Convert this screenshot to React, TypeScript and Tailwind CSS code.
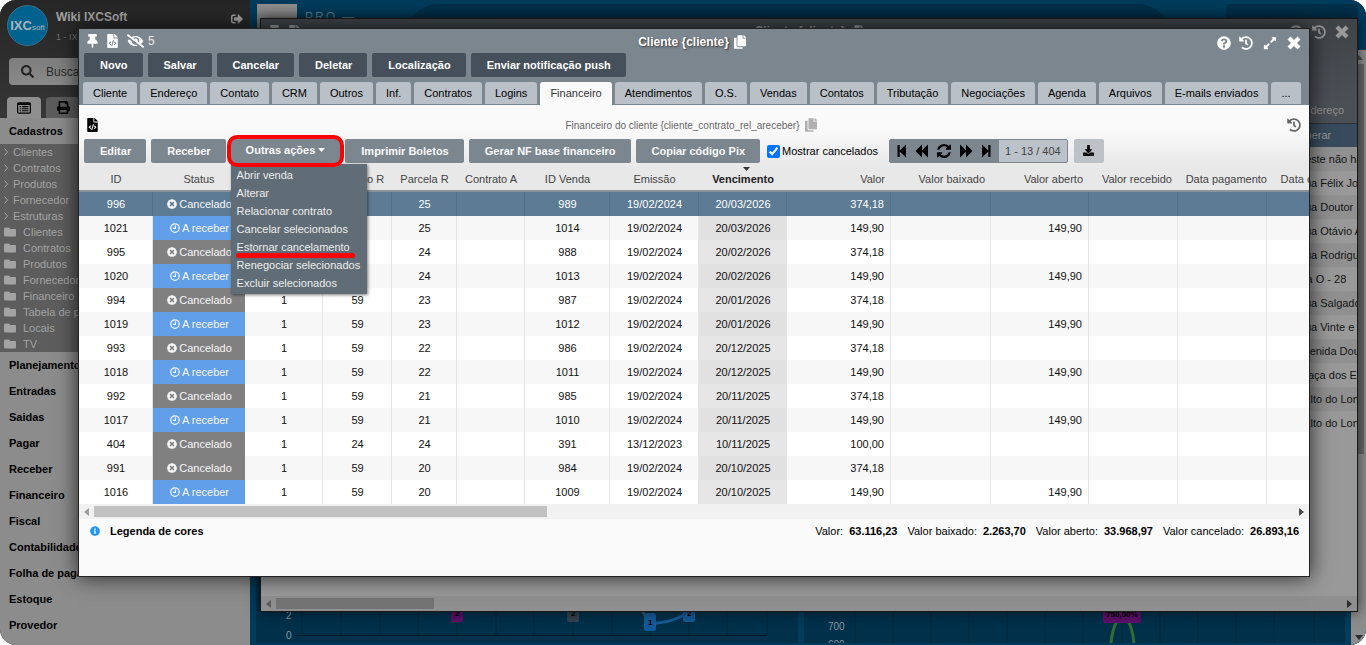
import React from 'react';
import {
    FaCopy,
    FaDownload,
    FaExpandAlt,
    FaEyeSlash,
    FaFileCode,
    FaFolder,
    FaHistory,
    FaInfoCircle,
    FaPrint,
    FaQuestionCircle,
    FaSearch,
    FaSignOutAlt,
    FaThumbtack,
    FaTimesCircle
} from 'react-icons/fa';

type Status = 'Cancelado' | 'A receber';

interface Receivable {
    id: string;
    status: Status;
    contract: string;
    parcel: string;
    sale: string;
    issued: string;
    due: string;
    value: string;
    open: string;
}

const row = (
    id: string,
    status: Status,
    contract: string,
    parcel: string,
    sale: string,
    issued: string,
    due: string,
    value: string,
    open = ''
): Receivable => ({ id, status, contract, parcel, sale, issued, due, value, open });

const RECEIVABLES: Receivable[] = [
    row('996', 'Cancelado', '59', '25', '989', '19/02/2024', '20/03/2026', '374,18'),
    row('1021', 'A receber', '59', '25', '1014', '19/02/2024', '20/03/2026', '149,90', '149,90'),
    row('995', 'Cancelado', '59', '24', '988', '19/02/2024', '20/02/2026', '374,18'),
    row('1020', 'A receber', '59', '24', '1013', '19/02/2024', '20/02/2026', '149,90', '149,90'),
    row('994', 'Cancelado', '59', '23', '987', '19/02/2024', '20/01/2026', '374,18'),
    row('1019', 'A receber', '59', '23', '1012', '19/02/2024', '20/01/2026', '149,90', '149,90'),
    row('993', 'Cancelado', '59', '22', '986', '19/02/2024', '20/12/2025', '374,18'),
    row('1018', 'A receber', '59', '22', '1011', '19/02/2024', '20/12/2025', '149,90', '149,90'),
    row('992', 'Cancelado', '59', '21', '985', '19/02/2024', '20/11/2025', '374,18'),
    row('1017', 'A receber', '59', '21', '1010', '19/02/2024', '20/11/2025', '149,90', '149,90'),
    row('404', 'Cancelado', '24', '24', '391', '13/12/2023', '10/11/2025', '100,00'),
    row('991', 'Cancelado', '59', '20', '984', '19/02/2024', '20/10/2025', '374,18'),
    row('1016', 'A receber', '59', '20', '1009', '19/02/2024', '20/10/2025', '149,90', '149,90')
];

const COLUMNS = [
    { label: 'ID', className: 'w-[74px] text-center' },
    { label: 'Status', className: 'w-[92px] text-center' },
    { label: '', className: 'w-[78px] text-center' },
    { label: 'Contrato R', className: 'w-[69px] text-center' },
    { label: 'Parcela R', className: 'w-[65px] text-center' },
    { label: 'Contrato A', className: 'w-[68px] text-center' },
    { label: 'ID Venda', className: 'w-[85px] text-center' },
    { label: 'Emissão', className: 'w-[89px] text-center' },
    { label: 'Vencimento', className: 'w-[88px] text-center' },
    { label: 'Valor', className: 'w-[104px] pr-1.5 text-right' },
    { label: 'Valor baixado', className: 'w-[100px] pr-1.5 text-right' },
    { label: 'Valor aberto', className: 'w-[98px] pr-1.5 text-right' },
    { label: 'Valor recebido', className: 'w-[89px] pr-1.5 text-right' },
    { label: 'Data pagamento', className: 'w-[89px] text-right' },
    { label: 'Data cancelamento', className: 'w-[122px] text-center' }
];

const SHORTCUTS = ['Clientes', 'Contratos', 'Produtos', 'Fornecedor', 'Estruturas'];
const FOLDERS = ['Clientes', 'Contratos', 'Produtos', 'Fornecedores', 'Financeiro', 'Tabela de preços', 'Locais', 'TV'];
const SECTIONS = [
    'Planejamento',
    'Entradas',
    'Saidas',
    'Pagar',
    'Receber',
    'Financeiro',
    'Fiscal',
    'Contabilidade',
    'Folha de pagamento',
    'Estoque',
    'Provedor'
];

const FORM_ACTIONS = ['Novo', 'Salvar', 'Cancelar', 'Deletar', 'Localização', 'Enviar notificação push'];
const TABS = [
    'Cliente',
    'Endereço',
    'Contato',
    'CRM',
    'Outros',
    'Inf.',
    'Contratos',
    'Logins',
    'Financeiro',
    'Atendimentos',
    'O.S.',
    'Vendas',
    'Contatos',
    'Tributação',
    'Negociações',
    'Agenda',
    'Arquivos',
    'E-mails enviados',
    '...'
];
const MENU_ITEMS = [
    'Abrir venda',
    'Alterar',
    'Relacionar contrato',
    'Cancelar selecionados',
    'Estornar cancelamento',
    'Renegociar selecionados',
    'Excluir selecionados'
];
const ADDRESSES = [
    'Neste não há',
    'Rua Félix José',
    'Rua Doutor',
    'Rua Otávio A',
    'Rua Rodrigues',
    'Via O - 28',
    'Rua Salgado',
    'Rua Vinte e',
    'Avenida Doutor',
    'Praça dos E',
    'Salto do Lontra',
    'Salto do Lontra'
];
const TOTALS = [
    { label: 'Valor:', value: '63.116,23' },
    { label: 'Valor baixado:', value: '2.263,70' },
    { label: 'Valor aberto:', value: '33.968,97' },
    { label: 'Valor cancelado:', value: '26.893,16' }
];

const ClockIcon = () => (
    <svg viewBox="0 0 16 16" className="size-2.5" fill="none" stroke="currentColor" strokeWidth="2">
        <circle cx="8" cy="8" r="6.8" />
        <path d="M8.6 3.6v5H4.6" strokeWidth="1.8" />
    </svg>
);

const CloseIcon = () => (
    <svg viewBox="0 0 14 14" className="size-3.5" fill="none" stroke="currentColor" strokeWidth="4.2">
        <path d="M2 2l10 10M12 2L2 12" />
    </svg>
);

const ListIcon = () => (
    <svg viewBox="0 0 16 13" className="h-3 w-3.5" fill="none" stroke="currentColor">
        <rect x="0.7" y="0.7" width="14.6" height="11.6" rx="1.2" strokeWidth="1.4" />
        <path d="M1 2h14" strokeWidth="2" />
        <path d="M3 5h1.6M3 7.3h1.6M3 9.6h1.6M5.6 5H13M5.6 7.3H13M5.6 9.6H13" strokeWidth="1.3" />
    </svg>
);

const StepIcon = () => (
    <svg viewBox="0 0 10 14" className="h-3.5 w-2.5" fill="currentColor">
        <path d="M0.5 1h2.2v5.6L9 0.5v13L2.7 7.4V13H0.5z" />
    </svg>
);

const RewindIcon = () => (
    <svg viewBox="0 0 14 14" className="size-3.5" fill="currentColor">
        <path d="M0.5 7L7 0.6v5.7L13 0.6v12.8L7 7.7v5.7z" />
    </svg>
);

const RefreshIcon = () => (
    <svg viewBox="0 128 1536 1536" className="size-3.5" fill="currentColor">
        <path d="M1511 1056q0 5-1 7-64 268-268 434.5t-478 166.5q-146 0-282.5-55t-243.5-157l-129 129q-19 19-45 19t-45-19-19-45v-448q0-26 19-45t45-19h448q26 0 45 19t19 45-19 45l-137 137q71 66 161 102t187 36q134 0 250-65t186-179q11-17 53-117 8-23 30-23h192q13 0 22.5 9.5t9.5 22.5zm25-800v448q0 26-19 45t-45 19h-448q-26 0-45-19t-19-45 19-45l138-138q-148-137-349-137-134 0-250 65t-186 179q-11 17-53 117-8 23-30 23h-199q-13 0-22.5-9.5t-9.5-22.5v-7q65-268 270-434.5t480-166.5q146 0 284 55.5t245 156.5l130-129q19-19 45-19t45 19 19 45z" />
    </svg>
);

const Sidebar = () => (
    <aside className="flex w-[250px] shrink-0 flex-col bg-[#8c8c8c]">
        <div className="bg-linear-to-b from-[#262626] to-[#363636]">
            <div className="flex h-[58px] items-start gap-2 pl-[7px] pr-[7px] pt-[5px]">
                <div className="flex size-[41px] items-center justify-center rounded-full border border-[#3a6f88] bg-[#00628f] text-[#a9b4ba]">
                    <span className="text-[13px] font-bold leading-none">IXC</span>
                    <span className="pt-1 text-[8px] leading-none">soft</span>
                </div>
                <div className="flex-1 pt-1">
                    <div className="text-[12px] font-bold leading-4 text-[#a3a3a3]">Wiki IXCSoft</div>
                    <div className="pt-1 text-[9px] leading-4 text-[#6f6f6f]">1 - IXCSoft</div>
                </div>
                <button aria-label="Sair" className="pt-2 text-[#a0a0a0]">
                    <FaSignOutAlt className="size-3" />
                </button>
            </div>
            <label className="mx-[9px] flex h-[27px] items-center gap-3 rounded bg-linear-to-b from-[#7d7d7d] to-[#8a8a8a] pl-3 text-[#222222]">
                <FaSearch className="size-[13px] shrink-0" />
                <input
                    placeholder="Buscar"
                    className="w-full bg-transparent text-[12px] outline-none placeholder:text-[#2b2b2b]"
                />
            </label>
            <div className="mt-3 flex gap-[5px] pl-[7px]">
                <button
                    aria-label="Menu"
                    className="flex h-[21px] w-[34px] items-center justify-center rounded-t bg-[#8f8f8f] text-black"
                >
                    <ListIcon />
                </button>
                <button
                    aria-label="Relatórios"
                    className="flex h-[21px] w-[34px] items-center justify-center rounded-t bg-[#5c5c5c] text-black"
                >
                    <FaPrint className="size-[13px]" />
                </button>
            </div>
        </div>
        <nav className="text-black">
            <a href="#cadastros" className="block pl-[9px] text-[11px] font-bold leading-[26px]">
                Cadastros
            </a>
            <ul className="bg-[#5d5d5d] text-[11px] leading-4 text-[#a3a3a3]">
                {SHORTCUTS.map((item) => (
                    <li key={item}>
                        <a href="#atalho" className="flex items-center gap-[5px] pl-1">
                            <svg viewBox="0 0 4 8" className="h-2 w-1" fill="none" stroke="currentColor">
                                <path d="M0.5 0.5L3.5 4 0.5 7.5" />
                            </svg>
                            {item}
                        </a>
                    </li>
                ))}
                {FOLDERS.map((item) => (
                    <li key={item}>
                        <a href="#pasta" className="flex items-center gap-[7px] pl-1">
                            <FaFolder className="size-3" />
                            {item}
                        </a>
                    </li>
                ))}
            </ul>
            {SECTIONS.map((item) => (
                <a key={item} href="#secao" className="block pl-[9px] text-[11px] font-bold leading-[26px]">
                    {item}
                </a>
            ))}
        </nav>
    </aside>
);

const CHART_GRID = [46, 85, 124, 162, 201, 240, 278, 317, 356, 394, 433, 471, 511];
const PERCENT_GRID = [51, 89, 127, 165, 203, 241, 279, 318, 356, 394, 432, 470, 510];

const CountChart = () => (
    <svg width="540" height="34" className="text-[10px]">
        {CHART_GRID.map((x) => (
            <path key={x} d={`M${x} 0V26`} stroke="#002639" />
        ))}
        <path d="M38 26.5H511" stroke="#001a28" />
        <text x="30" y="10" fill="#8b98a0">2</text>
        <text x="30" y="30" fill="#8b98a0">0</text>
        <path d="M385 0l5 8" stroke="#4a5358" strokeWidth="3" />
        <path d="M394 15c16-2 24-3 36-10" stroke="#165c99" strokeWidth="3" fill="none" />
        <rect x="195" y="0" width="12" height="13" rx="2" fill="#5d1069" />
        <rect x="311" y="0" width="12" height="13" rx="2" fill="#33434d" />
        <rect x="351" y="0" width="9" height="3" rx="1" fill="#6f0f78" />
        <rect x="467" y="0" width="9" height="3" rx="1" fill="#33434d" />
        <rect x="388" y="4" width="12" height="18" rx="2" fill="#145a98" />
        <rect x="427" y="0" width="12" height="13" rx="2" fill="#145a98" />
        <g fill="#000000" className="text-[8px] font-bold">
            <text x="199" y="7">2</text>
            <text x="315" y="7">2</text>
            <text x="392" y="16">1</text>
            <text x="431" y="7">2</text>
        </g>
    </svg>
);

const PercentChart = () => (
    <svg width="542" height="34" className="text-[10px]">
        {PERCENT_GRID.map((x) => (
            <path key={x} d={`M${x} 0V34`} stroke="#002639" />
        ))}
        <text x="24" y="21" fill="#8b98a0">700</text>
        <text x="24" y="39" fill="#8b98a0">600</text>
        <path d="M307 34c1-10 3-17 6-22M324 12c4 6 5 13 6 22" stroke="#2f6f31" strokeWidth="3" fill="none" />
        <rect x="299" y="0" width="38" height="14" rx="2" fill="#5d1069" />
        <text x="302" y="8" fill="#000000" className="text-[8px] font-bold">750,00%</text>
    </svg>
);

const Dashboard = () => (
    <main className="flex min-w-0 flex-1 flex-col bg-[#003c5c]">
        <header className="flex h-[50px] shrink-0 gap-2 pl-[7px] pr-2 pt-1">
            <div className="h-full w-10 bg-linear-to-b from-[#8f8f8f] to-[#6b6b6b]" />
            <div className="w-[93px] whitespace-nowrap pt-1 text-[12px] tracking-[2px] text-[#5f7f90]">PRO —</div>
            <div className="h-full flex-1 rounded-t-[32px] bg-[#00304a]" />
            <div className="ml-12 h-full w-[132px] rounded bg-[#00304a]" />
        </header>
        <div className="flex min-h-0 flex-1">
            <div className="mb-0.5 flex min-w-0 flex-1 gap-1.5 px-1.5">
                <section className="flex min-w-0 flex-1 items-end overflow-hidden bg-[#00304a]">
                    <CountChart />
                </section>
                <section className="flex min-w-0 flex-1 items-end overflow-hidden bg-[#00304a]">
                    <PercentChart />
                </section>
            </div>
            <div className="flex w-[15px] flex-col items-center justify-between bg-[#8c8c8c] py-[5px]">
                <svg viewBox="0 0 8 5" className="h-[5px] w-2" fill="#4f4f4f">
                    <path d="M0 5l4-5 4 5z" />
                </svg>
                <div className="mb-auto mt-1 h-2/3 w-[11px] bg-[#666666]" />
                <svg viewBox="0 0 8 5" className="h-[5px] w-2" fill="#2c2c2c">
                    <path d="M0 0l4 5 4-5z" />
                </svg>
            </div>
        </div>
    </main>
);

interface ScrollBarProps {
    className: string;
    thumbClassName: string;
}

const ScrollBar: React.FC<ScrollBarProps> = ({ className, thumbClassName }) => (
    <div className={`flex h-[15px] shrink-0 items-center px-[5px] ${className}`}>
        <svg viewBox="0 0 5 8" className="mr-[5px] h-2 w-[5px]" fill="#000000" fillOpacity="0.35">
            <path d="M5 0v8L0 4z" />
        </svg>
        <div className={`h-[11px] ${thumbClassName}`} />
        <svg viewBox="0 0 5 8" className="ml-auto h-2 w-[5px]" fill="#000000" fillOpacity="0.7">
            <path d="M0 0v8l5-4z" />
        </svg>
    </div>
);

const ListWindow = () => (
    <div className="absolute bottom-[33px] left-[260px] right-2 top-[18px] flex flex-col overflow-hidden border border-[#191919] bg-[#999999] shadow-[0_0_12px_rgba(0,0,0,0.6)]">
        <div className="grid h-[84px] shrink-0 grid-cols-[1fr_auto_1fr] items-start bg-linear-to-b from-[#3f4347] to-[#4b5057] px-2 pt-1.5 text-[#999999]">
            <div className="flex gap-[9px]">
                <FaThumbtack className="h-3.5 w-[11px]" />
                <FaFileCode className="h-3.5 w-[11px]" />
            </div>
            <div className="flex items-start gap-1.5 text-[12px] font-bold leading-3">
                Cliente {'{cliente}'}
                <FaCopy className="h-3.5 w-3" />
            </div>
            <div className="flex items-center justify-end gap-[9px]">
                <FaQuestionCircle className="size-3.5" />
                <FaHistory className="size-3.5" />
                <CloseIcon />
            </div>
        </div>
        <table className="w-full table-fixed text-[11px]">
            <thead>
                <tr className="h-5 bg-[#4b5057] text-[#8f8f8f]">
                    <th />
                    <th className="w-[60px] border-b border-[#2e3236] pb-1.5 text-left font-normal leading-3">Endereço</th>
                </tr>
            </thead>
            <tbody className="text-[#141414]">
                <tr className="h-6 bg-[#384b5c] text-[#969696]">
                    <td />
                    <td className="whitespace-nowrap">Operar</td>
                </tr>
                {ADDRESSES.map((address, index) => (
                    <tr key={index} className="h-6 odd:bg-[#999999] even:bg-[#909090]">
                        <td />
                        <td className="overflow-hidden whitespace-nowrap">{address}</td>
                    </tr>
                ))}
            </tbody>
        </table>
        <div className="flex-1" />
        <ScrollBar className="bg-[#8f8f8f]" thumbClassName="w-[158px] bg-[#737373]" />
    </div>
);

const ClientHeader = () => (
    <div className="bg-[#7c868f]">
        <div className="grid h-6 grid-cols-[1fr_auto_1fr] items-center px-2 text-white">
            <div className="flex items-center gap-[9px]">
                <button aria-label="Fixar"><FaThumbtack className="h-3.5 w-[11px]" /></button>
                <button aria-label="Código"><FaFileCode className="h-3.5 w-[11px]" /></button>
                <button aria-label="Campos ocultos" className="flex items-center gap-1 text-[12px] text-[#e8e8e8]">
                    <FaEyeSlash className="h-3.5 w-[17px] text-white" />5
                </button>
            </div>
            <h1 className="flex items-center gap-[5px] pr-1 pt-0.5 text-[12px] font-bold [text-shadow:1px_1px_2px_#333]">
                Cliente {'{cliente}'}
                <FaCopy className="h-3.5 w-3" />
            </h1>
            <div className="flex items-center justify-end gap-2 pt-1">
                <button aria-label="Ajuda"><FaQuestionCircle className="size-3.5" /></button>
                <button aria-label="Histórico"><FaHistory className="size-3.5" /></button>
                <button aria-label="Expandir" className="px-0.5"><FaExpandAlt className="size-3.5" /></button>
                <button aria-label="Fechar"><CloseIcon /></button>
            </div>
        </div>
        <div className="flex gap-[5px] px-[5px] text-[11px] font-bold text-white">
            {FORM_ACTIONS.map((action) => (
                <button key={action} className="h-6 rounded-xs bg-[#46505a] pl-4 pr-[15px]">
                    {action}
                </button>
            ))}
        </div>
        <div role="tablist" className="mt-[5px] flex gap-[3px] overflow-hidden pl-1 text-[11px] text-black">
            {TABS.map((tab) => (
                <button
                    key={tab}
                    role="tab"
                    aria-selected={tab === 'Financeiro'}
                    className={
                        tab === 'Financeiro'
                            ? 'h-[23px] shrink-0 rounded-t-[3px] bg-[#fafafa] px-2.5 text-[#333333]'
                            : 'mb-px h-[22px] shrink-0 rounded-t-[3px] bg-[#bac0c8] px-2.5'
                    }
                >
                    {tab}
                </button>
            ))}
        </div>
    </div>
);

const TOOL_BUTTON = 'h-6 rounded-xs bg-[#7c868f] pl-4 pr-[15px]';

const Toolbar = () => (
    <div className="bg-linear-to-b from-[#fafafa] from-40% to-[#e8e8e8] pb-1">
        <div className="grid h-[34px] grid-cols-[1fr_auto_1fr] items-center px-2 pt-1.5">
            <FaFileCode className="h-3.5 w-[11px] text-black" />
            <h2 className="flex items-center gap-[5px] pr-1.5 text-[10px] text-[#666666]">
                Financeiro do cliente {'{cliente_contrato_rel_areceber}'}
                <FaCopy className="h-3.5 w-3 text-[#b0b0b0]" />
            </h2>
            <FaHistory className="size-3.5 justify-self-end text-[#666666]" />
        </div>
        <div className="flex items-center px-[5px] text-[11px]">
            <div className="flex gap-[5px] font-bold text-[#fafafa]">
                <button className={TOOL_BUTTON}>Editar</button>
                <button className={TOOL_BUTTON}>Receber</button>
                <div className="relative">
                    <button className="relative z-20 flex h-6 items-center gap-[3px] rounded-md bg-[#7c868f] px-[15px] pb-0.5 ring-4 ring-[#ff0000]">
                        Outras ações
                        <svg viewBox="0 0 7 4" className="h-1 w-[7px]" fill="currentColor">
                            <path d="M0 0h7L3.5 4z" />
                        </svg>
                    </button>
                    <ul className="absolute left-0 top-[25px] z-10 w-[136px] bg-[#606c76] py-0.5 font-normal text-[#ededed] shadow-[1px_1px_3px_rgba(0,0,0,0.5)]">
                        {MENU_ITEMS.map((item) => (
                            <li key={item} className="relative">
                                <button className="block w-full whitespace-nowrap pl-1.5 text-left leading-[18px]">{item}</button>
                                {item === 'Estornar cancelamento' && (
                                    <span className="absolute -bottom-0.5 left-[5px] h-[5px] w-[119px] rounded-full bg-[#ff0000]" />
                                )}
                            </li>
                        ))}
                    </ul>
                </div>
                <button className={TOOL_BUTTON}>Imprimir Boletos</button>
                <button className={TOOL_BUTTON}>Gerar NF base financeiro</button>
                <button className={TOOL_BUTTON}>Copiar código Pix</button>
            </div>
            <label className="ml-[7px] flex items-center gap-0.5 whitespace-nowrap text-black">
                <input type="checkbox" defaultChecked className="size-[13px]" />
                Mostrar cancelados
            </label>
            <div className="ml-[11px] flex h-6 items-stretch overflow-hidden rounded-xs border border-[#7c868f] bg-[#7c868f] text-black">
                <div className="flex items-center gap-2 pl-[7px] pr-2">
                    <button aria-label="Primeira página"><StepIcon /></button>
                    <button aria-label="Página anterior"><RewindIcon /></button>
                    <button aria-label="Atualizar"><RefreshIcon /></button>
                    <button aria-label="Próxima página" className="rotate-180"><RewindIcon /></button>
                    <button aria-label="Última página" className="rotate-180"><StepIcon /></button>
                </div>
                <span className="flex items-center whitespace-nowrap bg-[#bcc2c9] px-1.5 text-[#444444]">1 - 13 / 404</span>
            </div>
            <button aria-label="Exportar" className="ml-1.5 flex h-6 w-[30px] items-center justify-center rounded-xs bg-[#bcc2c7] pb-0.5 text-black">
                <FaDownload className="size-[11px]" />
            </button>
        </div>
    </div>
);

const ReceivablesTable = () => (
    <div className="overflow-hidden">
        <table className="w-full min-w-[1310px] table-fixed border-separate border-spacing-0 text-[11px]">
            <thead>
                <tr className="h-[25px] bg-[#e8e8e8] text-[#444444]">
                    {COLUMNS.map(({ label, className }) => (
                        <th
                            key={label}
                            className={`relative whitespace-nowrap border-b-2 border-[#8b9299] leading-4 ${className} ${
                                label === 'Vencimento' ? 'font-bold text-[#222222]' : 'font-normal'
                            }`}
                        >
                            {label}
                            {label === 'Vencimento' && (
                                <svg viewBox="0 0 7 4" className="absolute left-1/2 top-0 h-1 w-[7px]" fill="#333333">
                                    <path d="M0 0h7L3.5 4z" />
                                </svg>
                            )}
                        </th>
                    ))}
                </tr>
            </thead>
            <tbody>
                {RECEIVABLES.map((item, index) => {
                    const selected = index === 0;
                    const canceled = item.status === 'Cancelado';
                    const statusColor = canceled ? 'bg-[#808080]' : 'bg-[#629fe9]';
                    const cells = [item.contract, item.parcel, '', item.sale, item.issued];

                    return (
                        <tr
                            key={item.id}
                            className={`h-6 text-center [&>td]:pl-px ${
                                selected
                                    ? 'bg-[#5d7b95] text-white [&>td]:border-[#527089]'
                                    : 'text-[#111111] odd:bg-white even:bg-[#f7f7f7] [&>td]:border-[#e4e4e4]'
                            }`}
                        >
                            <td className="border-r">{item.id}</td>
                            <td className={`text-[#f5f5f5] ${selected ? '' : statusColor}`}>
                                <span className="flex items-center justify-center gap-0.5">
                                    {canceled ? <FaTimesCircle className="size-2.5" /> : <ClockIcon />}
                                    {item.status}
                                </span>
                            </td>
                            <td className="border-r">1</td>
                            {cells.map((cell, i) => (
                                <td key={i} className="border-r">{cell}</td>
                            ))}
                            <td className={`border-r ${selected ? '' : index % 2 ? 'bg-[#e1e1e1]' : 'bg-[#e6e6e6]'}`}>{item.due}</td>
                            <td className="border-r pr-1.5 text-right">{item.value}</td>
                            <td className="border-r" />
                            <td className="border-r pr-1.5 text-right">{item.open}</td>
                            <td className="border-r" />
                            <td className="border-r" />
                            <td />
                        </tr>
                    );
                })}
            </tbody>
        </table>
    </div>
);

const ClientWindow = () => (
    <div className="absolute bottom-[68px] left-[78px] right-14 top-7 flex flex-col border border-[#222222] bg-[#fafafa] shadow-[0_0_20px_rgba(0,0,0,0.75)]">
        <ClientHeader />
        <Toolbar />
        <ReceivablesTable />
        <ScrollBar className="bg-[#f1f1f1]" thumbClassName="w-[453px] bg-[#c1c1c1]" />
        <div className="flex h-6 items-center pl-[11px] pr-2.5 text-[11px] text-black">
            <button className="flex items-center gap-2.5 font-bold">
                <FaInfoCircle className="size-2.5 text-[#2196f3]" />
                Legenda de cores
            </button>
            <dl className="ml-auto flex gap-2.5">
                {TOTALS.map(({ label, value }) => (
                    <div key={label} className="flex gap-1.5">
                        <dt>{label}</dt>
                        <dd className="font-bold">{value}</dd>
                    </div>
                ))}
            </dl>
        </div>
    </div>
);

export default function App() {
    return (
        <div className="relative flex min-h-screen overflow-hidden rounded-2xl bg-[#202020] font-['Liberation_Sans',Arial,sans-serif]">
            <Sidebar />
            <Dashboard />
            <ListWindow />
            <ClientWindow />
        </div>
    );
}
